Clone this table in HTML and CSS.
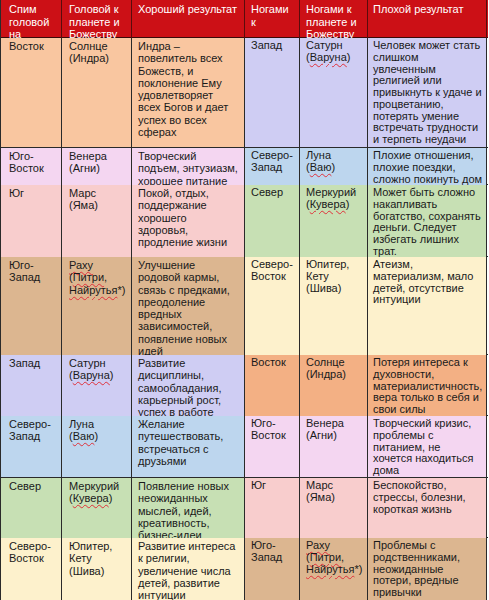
FILE: index.html
```html
<!DOCTYPE html>
<html lang="ru">
<head>
<meta charset="utf-8">
<title>Сон и стороны света</title>
<link rel="stylesheet" href="styles.css">
</head>
<body>
<div class="table">
  <div class="row head">
    <div class="cell c1">Спим<br>головой<br>на</div>
    <div class="cell c2">Головой к<br>планете и<br>Божеству</div>
    <div class="cell c3">Хороший результат</div>
    <div class="cell c4">Ногами<br>к</div>
    <div class="cell c5">Ногами к<br>планете и<br>Божеству</div>
    <div class="cell c6">Плохой результат</div>
  </div>
  <div class="row r1">
    <div class="cell c1 peach">Восток</div>
    <div class="cell c2 peach">Солнце<br>(Индра)</div>
    <div class="cell c3 peach">Индра –<br>повелитель всех<br>Божеств, и<br>поклонение Ему<br>удовлетворяет<br>всех Богов и дает<br>успех во всех<br>сферах</div>
    <div class="cell c4 lavender">Запад</div>
    <div class="cell c5 lavender">Сатурн<br>(<span class="sp">Варуна</span>)</div>
    <div class="cell c6 lavender">Человек может стать<br>слишком<br>увлеченным<br>религией или<br>привыкнуть к удаче и<br>процветанию,<br>потерять умение<br>встречать трудности<br>и терпеть неудачи</div>
  </div>
  <div class="row r2">
    <div class="cell c1 lpink">Юго-<br>Восток</div>
    <div class="cell c2 lpink">Венера<br>(Агни)</div>
    <div class="cell c3 lpink">Творческий<br>подъем, энтузиазм,<br>хорошее питание</div>
    <div class="cell c4 blue">Северо-<br>Запад</div>
    <div class="cell c5 blue">Луна<br>(<span class="sp">Ваю</span>)</div>
    <div class="cell c6 blue">Плохие отношения,<br>плохие поездки,<br>сложно покинуть дом</div>
  </div>
  <div class="row r3">
    <div class="cell c1 pink">Юг</div>
    <div class="cell c2 pink">Марс<br>(Яма)</div>
    <div class="cell c3 pink">Покой, отдых,<br>поддержание<br>хорошего<br>здоровья,<br>продление жизни</div>
    <div class="cell c4 green">Север</div>
    <div class="cell c5 green">Меркурий<br>(<span class="sp">Кувера</span>)</div>
    <div class="cell c6 green">Может быть сложно<br>накапливать<br>богатство, сохранять<br>деньги. Следует<br>избегать лишних<br>трат.</div>
  </div>
  <div class="row r4">
    <div class="cell c1 tan">Юго-<br>Запад</div>
    <div class="cell c2 tan"><span class="sp">Раху</span><br>(<span class="sp">Питри</span>,<br><span class="sp">Найрутья</span>*)</div>
    <div class="cell c3 tan">Улучшение<br>родовой кармы,<br>связь с предками,<br>преодоление<br>вредных<br>зависимостей,<br>появление новых<br>идей</div>
    <div class="cell c4 yellow">Северо-<br>Восток</div>
    <div class="cell c5 yellow">Юпитер,<br>Кету<br>(Шива)</div>
    <div class="cell c6 yellow">Атеизм,<br>материализм, мало<br>детей, отсутствие<br>интуиции</div>
  </div>
  <div class="row r5">
    <div class="cell c1 lavender">Запад</div>
    <div class="cell c2 lavender">Сатурн<br>(<span class="sp">Варуна</span>)</div>
    <div class="cell c3 lavender">Развитие<br>дисциплины,<br>самообладания,<br>карьерный рост,<br>успех в работе</div>
    <div class="cell c4 orange">Восток</div>
    <div class="cell c5 orange">Солнце<br>(Индра)</div>
    <div class="cell c6 orange">Потеря интереса к<br>духовности,<br>материалистичность,<br>вера только в себя и<br>свои силы</div>
  </div>
  <div class="row r6">
    <div class="cell c1 blue">Северо-<br>Запад</div>
    <div class="cell c2 blue">Луна<br>(<span class="sp">Ваю</span>)</div>
    <div class="cell c3 blue">Желание<br>путешествовать,<br>встречаться с<br>друзьями</div>
    <div class="cell c4 lpink">Юго-<br>Восток</div>
    <div class="cell c5 lpink">Венера<br>(Агни)</div>
    <div class="cell c6 lpink">Творческий кризис,<br>проблемы с<br>питанием, не<br>хочется находиться<br>дома</div>
  </div>
  <div class="row r7">
    <div class="cell c1 green">Север</div>
    <div class="cell c2 green">Меркурий<br>(<span class="sp">Кувера</span>)</div>
    <div class="cell c3 green">Появление новых<br>неожиданных<br>мыслей, идей,<br>креативность,<br>бизнес-идеи</div>
    <div class="cell c4 pink">Юг</div>
    <div class="cell c5 pink">Марс<br>(Яма)</div>
    <div class="cell c6 pink">Беспокойство,<br>стрессы, болезни,<br>короткая жизнь</div>
  </div>
  <div class="row r8">
    <div class="cell c1 yellow">Северо-<br>Восток</div>
    <div class="cell c2 yellow">Юпитер,<br>Кету<br>(Шива)</div>
    <div class="cell c3 yellow">Развитие интереса<br>к религии,<br>увеличение числа<br>детей, развитие<br>интуиции</div>
    <div class="cell c4 tan">Юго-<br>Запад</div>
    <div class="cell c5 tan"><span class="sp">Раху</span><br>(<span class="sp">Питри</span>,<br><span class="sp">Найрутья</span>*)</div>
    <div class="cell c6 tan">Проблемы с<br>родственниками,<br>неожиданные<br>потери, вредные<br>привычки</div>
  </div>
</div>
</body>
</html>
```

FILE: styles.css
```css
html, body {
  margin: 0;
  padding: 0;
  background: #ffffff;
}

body {
  font-family: "Liberation Sans", Arial, sans-serif;
  font-size: 11px;
  line-height: 12.25px;
  color: #1a1a1a;
}

.table {
  display: flex;
  flex-direction: column;
  width: 488px;
  border-left: 1px solid #2a2a2a;
  box-sizing: border-box;
}

.row {
  display: grid;
  grid-template-columns: 61px 70px 113px 55px 68px 119px;
  border-bottom: 1px solid #2a2a2a;
  box-sizing: border-box;
}

.cell {
  border-right: 1px solid #2a2a2a;
  padding: 2px 1px 0 6px;
  overflow: visible;
  white-space: nowrap;
  min-width: 0;
}

.c1 { padding-left: 8px; }
.c2 { padding-left: 7px; }
.c4, .c5, .c6 { line-height: 11.75px; }
.c5 { padding-left: 6px; }
.c6 { padding-left: 5px; }

.head {
  height: 38px;
  background: #cc1016;
  border-bottom-color: #3a0a0a;
}
.head .cell {
  color: #ffffff;
  padding-top: 3px;
  line-height: 12.5px;
  border-right-color: #5a0c0c;
}

.r1 { height: 110px; }
.r2 { height: 37px; }
.r3 { height: 72px; }
.r4 { height: 98px; }
.r5 { height: 61px; }
.r6 { height: 62px; }
.r7 { height: 60px; }
.r8 { height: 80px; }

.peach { background: #f9c6a0; }
.orange { background: #f3b084; }
.lavender { background: #cfcdf3; }
.lpink { background: #f4d6f1; }
.blue { background: #bdd6ee; }
.pink { background: #f8cdcd; }
.green { background: #c7e0b4; }
.tan { background: #dcb690; }
.yellow { background: #fdf1cc; }

.sp {
  text-decoration: underline wavy #e0303a;
  text-decoration-thickness: 1px;
  text-underline-offset: 2px;
}
```
